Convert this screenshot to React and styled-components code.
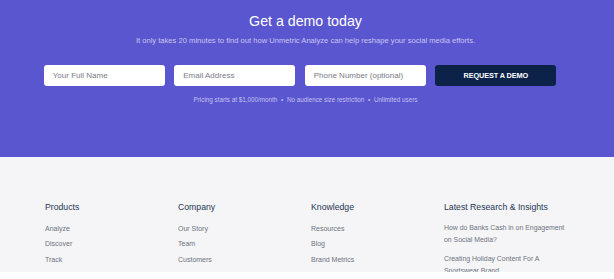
import React from 'react'
import styled, { createGlobalStyle } from 'styled-components'

const GlobalStyle = createGlobalStyle`
  html, body {
    margin: 0;
    padding: 0;
    background: #ffffff;
  }
  body {
    font-family: "Liberation Sans", Arial, sans-serif;
    -webkit-font-smoothing: antialiased;
  }
`

const footerColumns = [
  { title: 'Products', links: ['Analyze', 'Discover', 'Track', 'API'] },
  { title: 'Company', links: ['Our Story', 'Team', 'Customers', 'Press & News'] },
  { title: 'Knowledge', links: ['Resources', 'Blog', 'Brand Metrics', 'Social Trends'] },
]

const research = [
  'How do Banks Cash in on Engagement on Social Media?',
  'Creating Holiday Content For A Sportswear Brand',
]

const App = () => {
  return <Page>
    <GlobalStyle />
    <Hero>
      <Title>Get a demo today</Title>
      <Subtitle>It only takes 20 minutes to find out how Unmetric Analyze can help reshape your social media efforts.</Subtitle>
      <Form onSubmit={(e) => e.preventDefault()}>
        <Input placeholder="Your Full Name" />
        <Input placeholder="Email Address" />
        <Input placeholder="Phone Number (optional)" />
        <Button type="submit">REQUEST A DEMO</Button>
      </Form>
      <Note>Pricing starts at $1,000/month <Dot>•</Dot> No audience size restriction <Dot>•</Dot> Unlimited users</Note>
    </Hero>
    <Footer>
      <Columns>
        {footerColumns.map((col) => (
          <Column key={col.title}>
            <Heading>{col.title}</Heading>
            <LinkList>
              {col.links.map((link) => <LinkItem key={link}>{link}</LinkItem>)}
            </LinkList>
          </Column>
        ))}
        <Column>
          <Heading>Latest Research &amp; Insights</Heading>
          <ArticleList>
            {research.map((item) => <Article key={item}>{item}</Article>)}
          </ArticleList>
        </Column>
      </Columns>
    </Footer>
  </Page>
}

const Page = styled.div`
  width: 614px;
`

const Hero = styled.section`
  background: #5a56cf;
  height: 157px;
  box-sizing: border-box;
  padding-top: 11px;
  display: flex;
  flex-direction: column;
  align-items: center;
`

const Title = styled.h1`
  margin: 0 0 0 -3px;
  font-size: 14.2px;
  line-height: 20px;
  font-weight: 400;
  color: #ffffff;
`

const Subtitle = styled.p`
  margin: 4px 0 0 -3px;
  font-size: 7.6px;
  line-height: 12px;
  color: #c9c6f2;
`

const Form = styled.form`
  margin: 18px 0 0 -14px;
  display: grid;
  grid-template-columns: 121px 121px 121px 121px;
  column-gap: 9.5px;
`

const Input = styled.input`
  box-sizing: border-box;
  height: 21px;
  border: none;
  border-radius: 3px;
  background: #ffffff;
  padding: 0 9px;
  font-family: "Liberation Sans", Arial, sans-serif;
  font-size: 8px;
  color: #333;
  outline: none;
  &::placeholder {
    color: #7b7b85;
  }
`

const Button = styled.button`
  height: 21px;
  border: none;
  border-radius: 3px;
  background: #0c2249;
  color: #ffffff;
  font-family: "Liberation Sans", Arial, sans-serif;
  font-weight: 700;
  font-size: 7.3px;
  letter-spacing: -0.1px;
  cursor: pointer;
`

const Note = styled.p`
  margin: 9px 0 0 -3px;
  font-size: 6.3px;
  line-height: 9px;
  color: #c3c0ef;
`

const Dot = styled.span`
  margin: 0 2px;
`

const Footer = styled.footer`
  background: #f5f5f7;
  height: 115px;
  overflow: hidden;
  box-sizing: border-box;
  padding: 44px 0 0 45px;
`

const Columns = styled.div`
  display: grid;
  grid-template-columns: 133px 133px 133px 126px;
`

const Column = styled.div`
  display: flex;
  flex-direction: column;
`

const Heading = styled.h3`
  margin: 0;
  font-size: 8.7px;
  line-height: 12px;
  font-weight: 400;
  color: #253553;
`

const LinkList = styled.ul`
  list-style: none;
  margin: 11px 0 0;
  padding: 0;
  display: flex;
  flex-direction: column;
  gap: 6.3px;
`

const LinkItem = styled.li`
  font-size: 7px;
  line-height: 9px;
  color: #6c7280;
`

const ArticleList = styled.div`
  margin-top: 9px;
  display: flex;
  flex-direction: column;
  gap: 7px;
`

const Article = styled.div`
  font-size: 6.9px;
  line-height: 12px;
  color: #6c7280;
`

export default App
